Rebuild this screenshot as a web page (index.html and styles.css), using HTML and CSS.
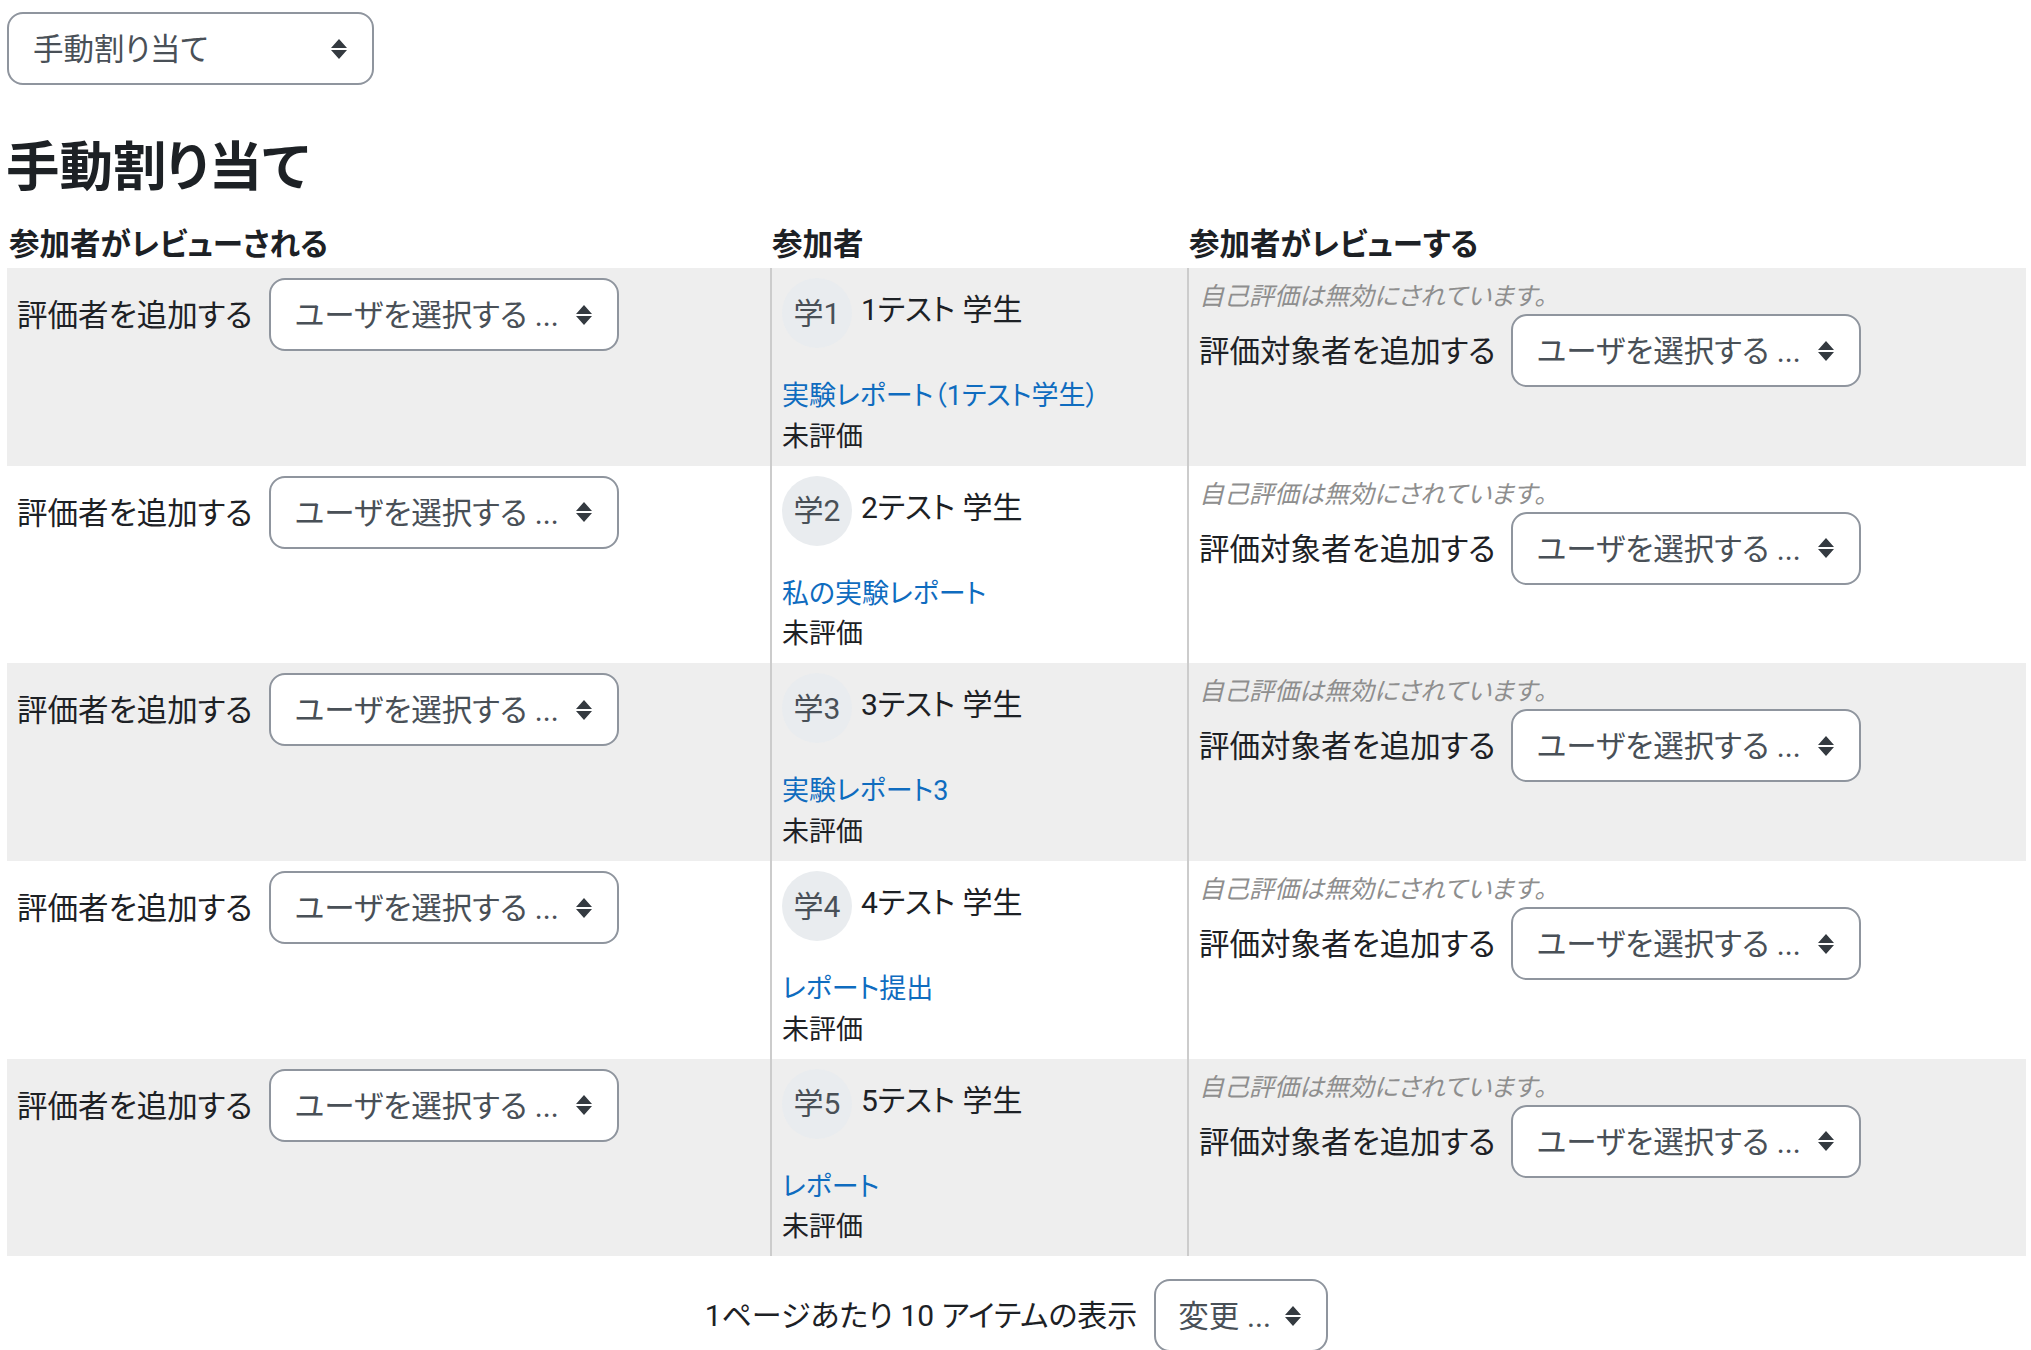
FILE: index.html
```html
<!DOCTYPE html>
<html lang="ja">
<head>
    <meta charset="UTF-8">
    <meta name="viewport" content="width=device-width, initial-scale=1.0">
    <title>手動割り当て</title>
    <link rel="stylesheet" href="styles.css">
</head>
<body>
    <select class="picker picker-mode"><option>手動割り当て</option></select>
    <h2 class="page-title">手動割り当て</h2>

    <table class="allocations">
        <thead>
            <tr>
                <th class="col-from">参加者がレビューされる</th>
                <th class="col-user">参加者</th>
                <th class="col-to">参加者がレビューする</th>
            </tr>
        </thead>
        <tbody>
            <tr class="odd">
                <td class="from"><div class="add-row"><label>評価者を追加する</label><select class="picker picker-from"><option>ユーザを選択する ...</option></select></div></td>
                <td class="user">
                    <div class="who"><span class="avatar">学1</span><span class="name">1テスト 学生</span></div>
                    <a class="report" href="#">実験レポート（1テスト学生）</a>
                    <div class="grade">未評価</div>
                </td>
                <td class="to">
                    <div class="self-note">自己評価は無効にされています。</div>
                    <div class="add-row"><label>評価対象者を追加する</label><select class="picker picker-to"><option>ユーザを選択する ...</option></select></div>
                </td>
            </tr>
            <tr>
                <td class="from"><div class="add-row"><label>評価者を追加する</label><select class="picker picker-from"><option>ユーザを選択する ...</option></select></div></td>
                <td class="user">
                    <div class="who"><span class="avatar">学2</span><span class="name">2テスト 学生</span></div>
                    <a class="report" href="#">私の実験レポート</a>
                    <div class="grade">未評価</div>
                </td>
                <td class="to">
                    <div class="self-note">自己評価は無効にされています。</div>
                    <div class="add-row"><label>評価対象者を追加する</label><select class="picker picker-to"><option>ユーザを選択する ...</option></select></div>
                </td>
            </tr>
            <tr class="odd">
                <td class="from"><div class="add-row"><label>評価者を追加する</label><select class="picker picker-from"><option>ユーザを選択する ...</option></select></div></td>
                <td class="user">
                    <div class="who"><span class="avatar">学3</span><span class="name">3テスト 学生</span></div>
                    <a class="report" href="#">実験レポート3</a>
                    <div class="grade">未評価</div>
                </td>
                <td class="to">
                    <div class="self-note">自己評価は無効にされています。</div>
                    <div class="add-row"><label>評価対象者を追加する</label><select class="picker picker-to"><option>ユーザを選択する ...</option></select></div>
                </td>
            </tr>
            <tr>
                <td class="from"><div class="add-row"><label>評価者を追加する</label><select class="picker picker-from"><option>ユーザを選択する ...</option></select></div></td>
                <td class="user">
                    <div class="who"><span class="avatar">学4</span><span class="name">4テスト 学生</span></div>
                    <a class="report" href="#">レポート提出</a>
                    <div class="grade">未評価</div>
                </td>
                <td class="to">
                    <div class="self-note">自己評価は無効にされています。</div>
                    <div class="add-row"><label>評価対象者を追加する</label><select class="picker picker-to"><option>ユーザを選択する ...</option></select></div>
                </td>
            </tr>
            <tr class="odd">
                <td class="from"><div class="add-row"><label>評価者を追加する</label><select class="picker picker-from"><option>ユーザを選択する ...</option></select></div></td>
                <td class="user">
                    <div class="who"><span class="avatar">学5</span><span class="name">5テスト 学生</span></div>
                    <a class="report" href="#">レポート</a>
                    <div class="grade">未評価</div>
                </td>
                <td class="to">
                    <div class="self-note">自己評価は無効にされています。</div>
                    <div class="add-row"><label>評価対象者を追加する</label><select class="picker picker-to"><option>ユーザを選択する ...</option></select></div>
                </td>
            </tr>
        </tbody>
    </table>

    <div class="per-page">
        <span>1ページあたり 10 アイテムの表示</span>
        <select class="picker picker-page"><option>変更 ...</option></select>
    </div>
</body>
</html>
```

FILE: styles.css
```css
html, body {
    height: 1350px;
    overflow: hidden;
}

body {
    margin: 0;
    padding: 12px 5px 0 7px;
    box-sizing: border-box;
    font-family: Roboto, "Noto Sans CJK JP", sans-serif;
    font-size: 30px;
    line-height: 45px;
    color: #1d2125;
    background-color: #fff;
    font-feature-settings: "palt";
}

.picker {
    display: block;
    height: 73px;
    padding: 2px 50px 0 24px;
    font-family: inherit;
    font-size: 30.5px;
    font-feature-settings: "palt";
    color: #495057;
    background-color: #fff;
    background-image: url("data:image/svg+xml,%3Csvg xmlns='http://www.w3.org/2000/svg' width='16' height='20'%3E%3Cpath fill='%23343a40' d='M8 0l8 9H0zM8 20l-8-9h16z'/%3E%3C/svg%3E");
    background-repeat: no-repeat;
    background-position: right 25px center;
    border: 2px solid #8f959e;
    border-radius: 16px;
    appearance: none;
    outline: none;
}

.picker-mode {
    width: 367px;
}

.picker-from {
    width: 350px;
}

.picker-to {
    width: 350px;
}

.picker-page {
    width: 174px;
    padding-left: 22px;
}

.page-title {
    margin: 47px 0 0 -1px;
    font-size: 53.5px;
    line-height: 72px;
    font-weight: 700;
}

.allocations {
    width: 2019px;
    margin-top: 17px;
    table-layout: fixed;
    border-collapse: separate;
    border-spacing: 0;
}

.allocations th {
    box-sizing: border-box;
    padding: 0 0 3px 2px;
    height: 47px;
    font-weight: 700;
    font-size: 30.5px;
    line-height: 40px;
    text-align: left;
    vertical-align: bottom;
}

.col-from {
    width: 763px;
}

.col-user {
    width: 417px;
}

.allocations td {
    padding: 10px 10px 8.7px;
    vertical-align: top;
}

.allocations td.user,
.allocations td.to {
    border-left: 2px solid #ccc;
}

.odd td {
    background-color: #eee;
}

.add-row {
    display: flex;
    align-items: flex-start;
    gap: 15px;
}

.from .add-row {
    gap: 16px;
}

.add-row label {
    font-size: 30.5px;
    line-height: 75px;
}

.who {
    display: flex;
    align-items: flex-start;
    gap: 9px;
    height: 70px;
    margin-bottom: 28px;
}

.avatar {
    display: flex;
    align-items: center;
    justify-content: center;
    width: 70px;
    height: 70px;
    font-size: 30px;
    color: #495057;
    background-color: #e9ecef;
    border-radius: 50%;
}

.name {
    margin-top: 9px;
}

.report {
    display: block;
    font-size: 27px;
    line-height: 40.5px;
    color: #0f6cbf;
    text-decoration: none;
}

.grade {
    font-size: 27px;
    line-height: 40.5px;
}

.self-note {
    height: 36px;
    font-size: 25px;
    line-height: 38px;
    font-style: italic;
    color: #8e8e8e;
}

.per-page {
    display: flex;
    justify-content: center;
    align-items: center;
    gap: 17px;
    margin-top: 23px;
}
```
